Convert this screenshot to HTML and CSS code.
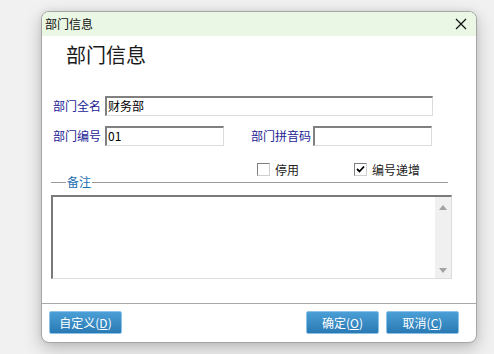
FILE: index.html
```html
<!DOCTYPE html>
<html lang="zh">
<head>
<meta charset="utf-8">
<title>部门信息</title>
<link rel="stylesheet" href="styles.css">
</head>
<body>
<div class="window">
  <div class="titlebar">
    <span class="title">部门信息</span>
    <svg class="close" width="12" height="12" viewBox="0 0 12 12"><path d="M1 1 L11 11 M11 1 L1 11" stroke="#111" stroke-width="1.2" fill="none"/></svg>
  </div>
  <div class="content">
    <div class="header">部门信息</div>
    <div class="form">
      <div class="row row1">
        <span class="label">部门全名</span>
        <div class="input wide">财务部</div>
      </div>
      <div class="row row2">
        <span class="label">部门编号</span>
        <div class="input short">01</div>
        <span class="label label2">部门拼音码</span>
        <div class="input short"></div>
      </div>
      <div class="row row3">
        <span class="check"></span><span class="ctext">停用</span>
        <span class="check checked second"><svg width="9" height="9" viewBox="0 0 9 9"><path d="M1 4 L3.5 6.5 L8 1.5" stroke="#000" stroke-width="1.8" fill="none"/></svg></span><span class="ctext">编号递增</span>
      </div>
      <div class="remark">
        <span class="line short-line"></span>
        <span class="rtext">备注</span>
        <span class="line"></span>
      </div>
      <div class="textarea">
        <div class="tbody"></div>
        <div class="scroll">
          <span class="arrow up"></span>
          <span class="arrow down"></span>
        </div>
      </div>
    </div>
  </div>
  <div class="footer">
    <button class="btn">自定义(<u>D</u>)</button>
    <div class="spacer"></div>
    <button class="btn">确定(<u>O</u>)</button>
    <button class="btn">取消(<u>C</u>)</button>
  </div>
</div>
</body>
</html>
```
FILE: styles.css
```css
html, body {
  margin: 0;
  padding: 0;
}
body {
  width: 494px;
  height: 354px;
  background: #f1f1f1;
  font-family: "Noto Sans CJK SC", "DejaVu Sans", sans-serif;
  font-size: 12px;
  overflow: hidden;
}
.window {
  margin: 11px 0 0 41px;
  width: 436px;
  height: 332px;
  box-sizing: border-box;
  border: 1px solid #a6a6a6;
  border-radius: 8px;
  background: #fff;
  display: flex;
  flex-direction: column;
  overflow: hidden;
  box-shadow: 0 6px 18px rgba(0,0,0,0.22), 0 0 6px rgba(0,0,0,0.08);
}
.titlebar {
  height: 24px;
  flex: none;
  background: #e9f7e4;
  display: flex;
  align-items: center;
  padding: 0 9px 0 3px;
}
.title {
  font-size: 12px;
  color: #111;
  line-height: 14px;
  flex: 1;
}
.close {
  display: block;
}
.content {
  flex: 1;
  display: flex;
  flex-direction: column;
}
.header {
  margin: 8px 0 0 24px;
  font-size: 20px;
  line-height: 22px;
  height: 22px;
  color: #1a1a1a;
}
.form {
  margin-top: 30px;
  padding-left: 9px;
  display: flex;
  flex-direction: column;
}
.row {
  display: flex;
  align-items: center;
  padding-left: 2px;
}
.row1, .row2 {
  height: 20px;
}
.row2 {
  margin-top: 10px;
}
.label {
  color: #1c1c96;
  width: 48px;
  margin-right: 4px;
  line-height: 14px;
  white-space: nowrap;
}
.label2 {
  width: 60px;
  margin-left: 27px;
  margin-right: 2px;
}
.input {
  box-sizing: border-box;
  height: 20px;
  border-top: 2px solid #808080;
  border-left: 2px solid #808080;
  border-right: 1px solid #dcdcdc;
  border-bottom: 1px solid #dcdcdc;
  background: #fff;
  color: #000;
  padding-left: 1px;
  line-height: 16px;
  font-size: 12px;
}
.wide {
  width: 328px;
}
.short {
  width: 119px;
}
.row3 {
  margin-top: 17px;
  height: 13px;
  padding-left: 206px;
}
.check {
  box-sizing: border-box;
  width: 13px;
  height: 13px;
  border: 1px solid #808080;
  border-right-color: #cfcfcf;
  border-bottom-color: #cfcfcf;
  background: #fff;
  display: flex;
  align-items: center;
  justify-content: center;
}
.check svg {
  display: block;
}
.ctext {
  margin-left: 5px;
  color: #222;
  line-height: 14px;
}
.second {
  margin-left: 55px;
}
.remark {
  height: 12px;
  display: flex;
  align-items: center;
  width: 397px;
}
.line {
  flex: 1;
  height: 1px;
  background: #9a9a9a;
}
.short-line {
  flex: none;
  width: 15px;
}
.rtext {
  color: #1e6fb4;
  line-height: 12px;
  padding: 0 1px;
}
.textarea {
  margin-top: 7px;
  width: 401px;
  height: 84px;
  box-sizing: border-box;
  border-top: 2px solid #7a7a7a;
  border-left: 2px solid #7a7a7a;
  border-right: 1px solid #dcdcdc;
  border-bottom: 1px solid #dcdcdc;
  display: flex;
}
.tbody {
  flex: 1;
  background: #fff;
}
.scroll {
  width: 16px;
  background: #f0f0f0;
  display: flex;
  flex-direction: column;
  justify-content: space-between;
  align-items: center;
  padding: 8px 0 5px;
}
.arrow {
  width: 0;
  height: 0;
  border-left: 4px solid transparent;
  border-right: 4px solid transparent;
}
.up {
  border-bottom: 5px solid #a3a3a3;
}
.down {
  border-top: 5px solid #a3a3a3;
}
.footer {
  flex: none;
  height: 39px;
  box-sizing: border-box;
  border-top: 1px solid #a8a8a8;
  display: flex;
  align-items: flex-start;
  padding: 7px 17px 0 7px;
}
.spacer {
  flex: 1;
}
.btn {
  width: 73px;
  height: 23px;
  margin-left: 7px;
  border: 1px solid #8cc2e6;
  border-radius: 2px;
  background: linear-gradient(#4a9fd6, #2a79b4);
  color: #fff;
  font-family: "Noto Sans CJK SC", "DejaVu Sans", sans-serif;
  font-size: 12px;
  line-height: 14px;
  padding: 0;
}
.btn:first-child {
  margin-left: 0;
}
.btn u {
  text-decoration: underline;
}
```
